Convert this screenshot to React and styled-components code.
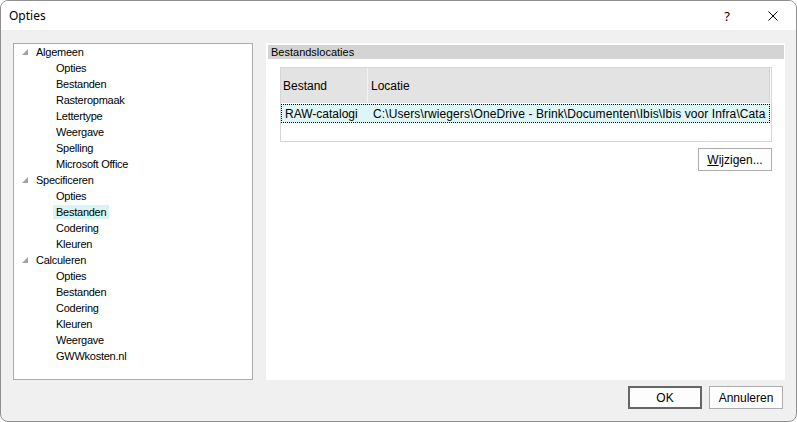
import React from "react";
import styled, { createGlobalStyle } from "styled-components";

const GlobalStyle = createGlobalStyle`
  html, body {
    margin: 0;
    padding: 0;
    background: #ffffff;
  }
  * {
    box-sizing: border-box;
  }
`;

const Window = styled.div`
  width: 797px;
  height: 422px;
  border: 1px solid #8f8f8f;
  border-radius: 8px;
  overflow: hidden;
  display: flex;
  flex-direction: column;
  background: #f0f0f0;
  font-family: "Liberation Sans", Arial, sans-serif;
  color: #000;
`;

const TitleBar = styled.div`
  height: 29px;
  background: #ffffff;
  display: flex;
  align-items: center;
  padding-left: 8px;
  font-family: "Noto Sans", "Open Sans", sans-serif;
  font-size: 12px;
`;

const Title = styled.div`
  flex: 1;
`;

const TitleButton = styled.div`
  width: 46px;
  height: 29px;
  display: flex;
  align-items: center;
  justify-content: center;
  font-size: 13px;
`;

const Body = styled.div`
  flex: 1;
  display: flex;
  flex-direction: column;
  padding: 13px 11px 0 12px;
`;

const Content = styled.div`
  height: 337px;
  display: flex;
  gap: 13px;
`;

const TreePanel = styled.div`
  width: 240px;
  flex-shrink: 0;
  background: #ffffff;
  border: 1px solid #acacac;
  font-size: 11px;
  letter-spacing: -0.25px;
`;

const TreeRow = styled.div`
  height: 16px;
  display: flex;
  align-items: center;
  padding-left: ${({ $child }) => ($child ? 39 : 8)}px;
`;

const Expander = styled.span`
  width: 11px;
  display: flex;
  align-items: center;
`;

const TreeLabel = styled.span`
  line-height: 14px;
  padding: 0 3px;
  background: ${({ $selected }) => ($selected ? "#d9f4f4" : "transparent")};
`;

const RightPanel = styled.div`
  flex: 1;
  min-width: 0;
  background: #ffffff;
  padding: 2px 1px 0 2px;
  display: flex;
  flex-direction: column;
`;

const SectionHeader = styled.div`
  height: 14px;
  background: #d4d4d4;
  font-size: 11px;
  line-height: 14px;
  padding-left: 3px;
`;

const Grid = styled.div`
  margin: 8px 12px 0 12px;
  height: 75px;
  border: 1px solid #d6d6d6;
  font-size: 12px;
`;

const GridHeader = styled.div`
  height: 35px;
  display: flex;
  margin-right: 1px;
  background: #e3e3e3;
  border-right: 1px solid #d0d0d0;
`;

const HeaderCell = styled.div`
  width: ${({ $w }) => ($w ? `${$w}px` : "auto")};
  flex: ${({ $w }) => ($w ? "none" : 1)};
  display: flex;
  align-items: center;
  padding-left: ${({ $pad }) => $pad}px;
  border-right: ${({ $w }) => ($w ? "1px solid #f3f3f3" : "none")};
`;

const GridRow = styled.div`
  height: 19px;
  margin: 1px 1px 0 0;
  display: flex;
  align-items: center;
  background: #dff6f6;
  border: 1px dotted #000;
  white-space: nowrap;
  overflow: hidden;
`;

const Cell = styled.div`
  width: ${({ $w }) => ($w ? `${$w}px` : "auto")};
  flex: ${({ $w }) => ($w ? "none" : 1)};
  min-width: 0;
  padding-left: ${({ $pad }) => $pad}px;
  letter-spacing: ${({ $spacing }) => $spacing || 0}px;
  overflow: hidden;
`;

const ButtonRow = styled.div`
  display: flex;
  justify-content: flex-end;
  gap: 7px;
  margin: ${({ $top }) => $top}px ${({ $right }) => $right}px 0 0;
`;

const Button = styled.button`
  width: 74px;
  height: 23px;
  padding: 0;
  background: #fdfdfd;
  border: ${({ $default }) => ($default ? "2px solid #666666" : "1px solid #adadad")};
  font-family: "Liberation Sans", Arial, sans-serif;
  font-size: 12px;
  color: #000;
  u {
    text-decoration: underline;
  }
`;

const Triangle = () => (
  <svg width="6" height="6" viewBox="0 0 6 6">
    <polygon points="6,0 6,6 0,6" fill="#a2a2a2" />
  </svg>
);

const CloseIcon = () => (
  <svg width="10" height="10" viewBox="0 0 10 10">
    <path d="M0.5 0.5 L9.5 9.5 M9.5 0.5 L0.5 9.5" stroke="#000" strokeWidth="1" />
  </svg>
);

const tree = [
  {
    label: "Algemeen",
    children: ["Opties", "Bestanden", "Rasteropmaak", "Lettertype", "Weergave", "Spelling", "Microsoft Office"],
  },
  { label: "Specificeren", children: ["Opties", "Bestanden", "Codering", "Kleuren"], selected: 1 },
  {
    label: "Calculeren",
    children: ["Opties", "Bestanden", "Codering", "Kleuren", "Weergave", "GWWkosten.nl"],
  },
];

const App = () => {
  return (
    <>
      <GlobalStyle />
      <Window>
        <TitleBar>
          <Title>Opties</Title>
          <TitleButton>?</TitleButton>
          <TitleButton>
            <CloseIcon />
          </TitleButton>
        </TitleBar>
        <Body>
          <Content>
            <TreePanel>
              {tree.map(group => (
                <React.Fragment key={group.label}>
                  <TreeRow>
                    <Expander>
                      <Triangle />
                    </Expander>
                    <TreeLabel>{group.label}</TreeLabel>
                  </TreeRow>
                  {group.children.map((child, i) => (
                    <TreeRow $child key={group.label + child}>
                      <TreeLabel $selected={group.selected === i}>{child}</TreeLabel>
                    </TreeRow>
                  ))}
                </React.Fragment>
              ))}
            </TreePanel>
            <RightPanel>
              <SectionHeader>Bestandslocaties</SectionHeader>
              <Grid>
                <GridHeader>
                  <HeaderCell $w={87} $pad={2}>Bestand</HeaderCell>
                  <HeaderCell $pad={3}>Locatie</HeaderCell>
                </GridHeader>
                <GridRow>
                  <Cell $w={87} $pad={3}>RAW-catalogi</Cell>
                  <Cell $pad={4} $spacing={0.1}>
                    C:\Users\rwiegers\OneDrive - Brink\Documenten\Ibis\Ibis voor Infra\Cata
                  </Cell>
                </GridRow>
              </Grid>
              <ButtonRow $top={6} $right={12}>
                <Button>
                  <u>W</u>ijzigen...
                </Button>
              </ButtonRow>
            </RightPanel>
          </Content>
          <ButtonRow $top={6} $right={2}>
            <Button $default>OK</Button>
            <Button>Annuleren</Button>
          </ButtonRow>
        </Body>
      </Window>
    </>
  );
};

export default App;
